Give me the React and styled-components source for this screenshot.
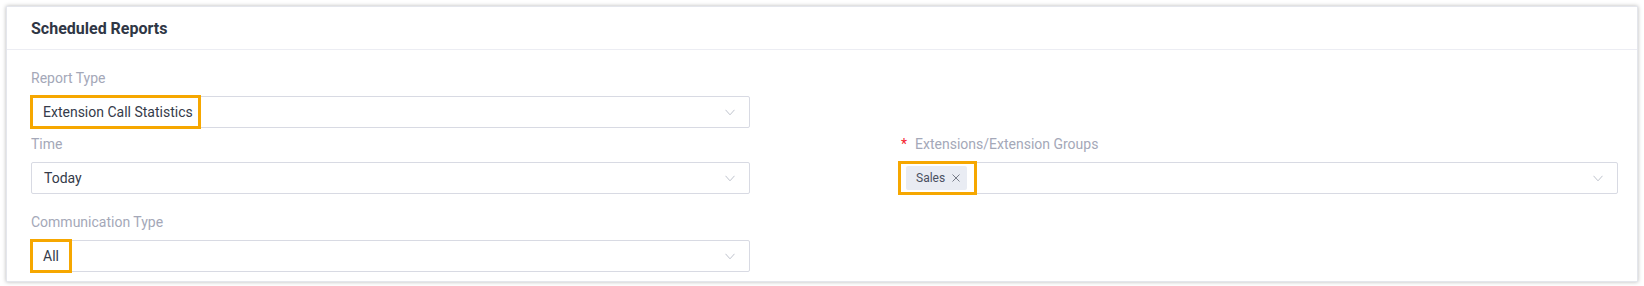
import styled, { createGlobalStyle } from "styled-components";

const GlobalStyle = createGlobalStyle`
  html, body {
    margin: 0;
    padding: 0;
    background: #fff;
  }
  body {
    font-family: Roboto, "Liberation Sans", Arial, sans-serif;
  }
`;

const Page = styled.div`
  padding: 6px;
`;

const Card = styled.section`
  background: #fff;
  border: 1px solid #e4e6ec;
  box-shadow: 0 0 4px rgba(0, 0, 0, 0.28);
`;

const Header = styled.header`
  height: 42px;
  display: flex;
  align-items: center;
  padding: 0 24px;
  border-bottom: 1px solid #ecedf3;
`;

const Title = styled.h2`
  margin: 0;
  font-size: 16px;
  font-weight: 700;
  color: #2f3645;
`;

const Body = styled.div`
  display: grid;
  grid-template-columns: 1fr 1fr;
  column-gap: 149px;
  padding: 17px 19px 9px 24px;
`;

const Field = styled.div`
  grid-column: ${(p) => p.$col || 1};
  margin-top: ${(p) => p.$mt || 0}px;
  display: flex;
  flex-direction: column;
`;

const Label = styled.label`
  display: flex;
  align-items: center;
  height: 22px;
  font-size: 14px;
  color: #a4a8b8;
  margin-bottom: 7px;
`;

const Required = styled.span`
  color: #f5222d;
  margin: 0 8px 0 2px;
`;

const Select = styled.div`
  height: 32px;
  box-sizing: border-box;
  border: 1px solid #d8dae3;
  border-radius: 2px;
  display: flex;
  align-items: center;
  padding: 0 14px 0 12px;
  font-size: 14px;
  color: #353b4a;
`;

const Value = styled.span`
  flex: 1;
  display: flex;
  align-items: stretch;
  align-self: stretch;
`;

const Highlight = styled.span`
  display: flex;
  align-items: center;
  margin: -2px 0 -2px -14px;
  padding: 0 ${(p) => p.$pr}px 0 ${(p) => p.$pl}px;
  border: 3px solid #f6a700;
`;

const Plain = styled.span`
  display: flex;
  align-items: center;
`;

const Tag = styled.span`
  display: inline-flex;
  align-items: center;
  height: 24px;
  padding: 0 7px 0 10px;
  background: #e9ecf3;
  border-radius: 2px;
  font-size: 12px;
  color: #4a5060;
  gap: 7px;
`;

const Chevron = () => (
  <svg width="10" height="7" viewBox="0 0 10 7" fill="none">
    <polyline points="0.5,0.8 5,5.8 9.5,0.8" stroke="#bfc3cd" strokeWidth="1" />
  </svg>
);

const Close = () => (
  <svg width="8" height="8" viewBox="0 0 8 8">
    <path d="M0.5 0.5L7.5 7.5M7.5 0.5L0.5 7.5" stroke="#777c88" strokeWidth="1" />
  </svg>
);

export default function App() {
  return (
    <Page>
      <GlobalStyle />
      <Card>
        <Header>
          <Title>Scheduled Reports</Title>
        </Header>
        <Body>
          <Field>
            <Label>Report Type</Label>
            <Select>
              <Value>
                <Highlight $pl={10} $pr={5}>Extension Call Statistics</Highlight>
              </Value>
              <Chevron />
            </Select>
          </Field>

          <Field $mt={5}>
            <Label>Time</Label>
            <Select>
              <Value>
                <Plain>Today</Plain>
              </Value>
              <Chevron />
            </Select>
          </Field>

          <Field $col={2} $mt={5}>
            <Label>
              <Required>*</Required>Extensions/Extension Groups
            </Label>
            <Select>
              <Value>
                <Highlight $pl={5} $pr={7}>
                  <Tag>
                    Sales <Close />
                  </Tag>
                </Highlight>
              </Value>
              <Chevron />
            </Select>
          </Field>

          <Field $mt={17}>
            <Label>Communication Type</Label>
            <Select>
              <Value>
                <Highlight $pl={10} $pr={10}>All</Highlight>
              </Value>
              <Chevron />
            </Select>
          </Field>
        </Body>
      </Card>
    </Page>
  );
}
